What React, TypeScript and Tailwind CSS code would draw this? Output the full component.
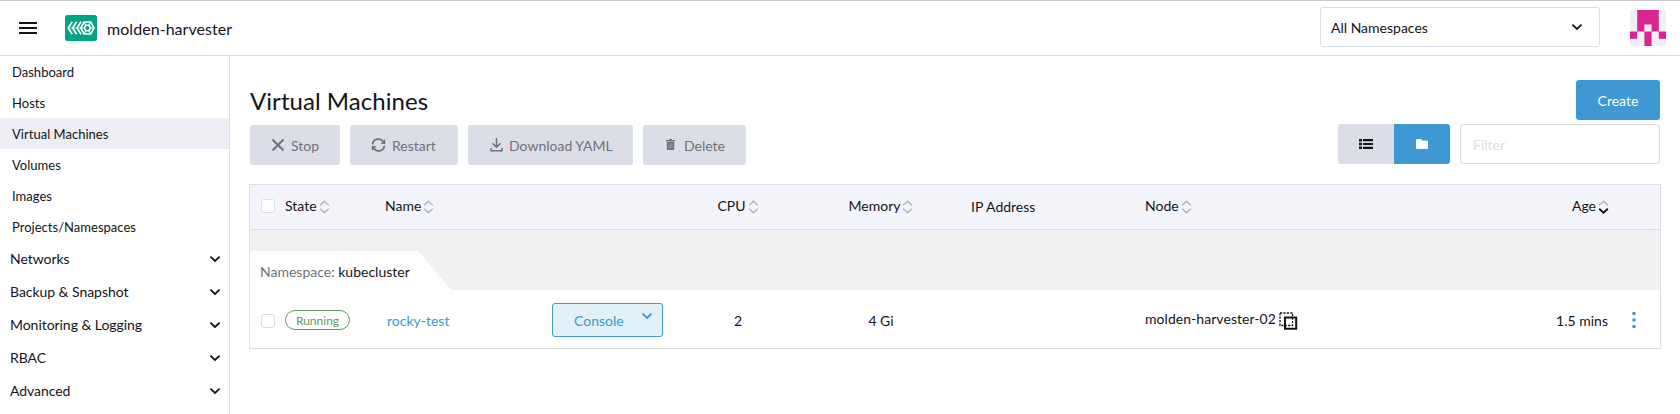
import type { ReactNode } from "react";

const navItems = ["Dashboard", "Hosts", "Virtual Machines", "Volumes", "Images", "Projects/Namespaces"];
const navGroups = ["Networks", "Backup & Snapshot", "Monitoring & Logging", "RBAC", "Advanced"];

function Chevron({ className = "" }: { className?: string }) {
  return (
    <svg className={className} width="12" height="8" viewBox="0 0 12 8" fill="none" stroke="currentColor" strokeWidth="1.8">
      <path d="M1.4 1.6 6 5.9l4.6-4.3" />
    </svg>
  );
}

function SortIcon({ active = false }: { active?: boolean }) {
  return (
    <svg className="ml-[2px] mt-[2px] shrink-0" width="11" height="14" viewBox="0 0 11 14" fill="none" strokeWidth="1.4">
      <path d="M1.2 5.2 5.5 1.3l4.3 3.9" stroke="#b2b3bb" />
      <path d="M1.2 8.8l4.3 3.9 4.3-3.9" stroke={active ? "#141419" : "#b2b3bb"} strokeWidth={active ? 1.9 : 1.4} />
    </svg>
  );
}

function Logo() {
  return (
    <svg className="ml-7 shrink-0" width="32" height="26" viewBox="0 0 32 26" fill="none">
      <rect width="32" height="26" rx="2.5" fill="#00a383" />
      <g stroke="#fff" strokeWidth="1.7">
        <path d="M7.2 6.8 3.2 13l4 6.2M11.6 6.8 7.6 13l4 6.2M16 6.8 12 13l4 6.2" />
        <path d="M19 7h6.8l3.2 6-3.2 6H19l-3.2-6z" />
        <circle cx="22.4" cy="13" r="2.8" strokeWidth="1.4" />
        <path d="M16 13h3.4M25.4 13H29M19 7l2 3.4M25.8 7l-2 3.4M19 19l2-3.4M25.8 19l-2-3.4" strokeWidth="1.2" />
        <path d="M4 13h12" strokeWidth=".7" />
      </g>
    </svg>
  );
}

function Avatar() {
  return (
    <svg className="ml-[30px] shrink-0" width="36" height="36" viewBox="0 0 5 5">
      <rect width="5" height="5" fill="#f0f0f0" />
      <path fill="#da2591" d="M1 0h3v3H3V2H2v1H1zM0 3h1v1H0zM4 3h1v1H4zM2 3h1v2H2z" />
    </svg>
  );
}

function ActionButton({ icon, label, width }: { icon: ReactNode; label: string; width: string }) {
  return (
    <button className={`flex h-10 items-center rounded-[3px] bg-[#dcdee7] pl-[21px] text-[14px] text-[#717179] ${width}`}>
      {icon}
      <span className="mt-[2px] whitespace-nowrap">{label}</span>
    </button>
  );
}

function Checkbox({ className }: { className: string }) {
  return <span className={`ml-[11px] mr-[10px] size-[14px] shrink-0 rounded-[3px] border border-[#dcdee7] bg-white ${className}`} />;
}

export default function App() {
  return (
    <div className="flex h-[414px] w-[1680px] flex-col overflow-hidden bg-white font-['Lato',sans-serif] text-[14px] leading-5 text-[#141419]">
      <header className="flex h-14 shrink-0 items-center border-b border-t border-b-[#dcdee7] border-t-[#c9c9c9] pl-[19px]">
        <svg width="18" height="12" viewBox="0 0 18 12" fill="#141419">
          <path d="M0 0h18v2H0zM0 5h18v2H0zM0 10h18v2H0z" />
        </svg>
        <Logo />
        <span className="ml-[10px] mt-px text-[16px] tracking-[0.05px]">molden-harvester</span>
        <div className="-mt-[2px] ml-auto flex h-10 w-[280px] items-center justify-between rounded-[3px] border border-[#dcdee7] pl-[10px] pr-[16px]">
          <span className="mt-[2px]">All Namespaces</span>
          <Chevron />
        </div>
        <Avatar />
        <div className="w-[14px]" />
      </header>

      <div className="flex min-h-0 flex-1">
        <nav className="w-[230px] shrink-0 border-r border-[#dcdee7]">
          {navItems.map((item) => (
            <div
              key={item}
              className={`flex h-[31px] items-center pl-3 text-[13px] tracking-[0.02px] ${item === "Virtual Machines" ? "bg-[#edeef3]" : ""}`}
            >
              {item}
            </div>
          ))}
          {navGroups.map((group) => (
            <div key={group} className="flex h-[33px] items-center justify-between pl-[10px] pr-2">
              <span className="tracking-[-0.05px]">{group}</span>
              <Chevron />
            </div>
          ))}
        </nav>

        <main className="min-w-0 flex-1 pl-[19px] pr-5 pt-6">
          <div className="flex h-10 items-center justify-between pl-px">
            <h1 className="mt-px text-[24px] leading-8 tracking-[0.05px]">Virtual Machines</h1>
            <button className="h-10 w-[84px] rounded-[3px] bg-[#3d98d3] pt-[2px] text-[14px] text-white">Create</button>
          </div>

          <div className="mt-1 flex h-[41px] pl-px">
            <div className="flex items-end gap-[10px]">
              <ActionButton
                width="w-[90px]"
                label="Stop"
                icon={
                  <svg className="mr-[6px]" width="14" height="14" viewBox="0 0 14 14" stroke="currentColor" strokeWidth="2">
                    <path d="m1.5 1.5 11 11M12.5 1.5l-11 11" />
                  </svg>
                }
              />
              <ActionButton
                width="w-[108px]"
                label="Restart"
                icon={
                  <svg className="mr-[6px]" width="15" height="14" viewBox="0 0 15 14" fill="none" stroke="currentColor" strokeWidth="1.7">
                    <path d="M1.5 6.4A5.8 5.8 0 0 1 12.6 4.6M13.5 7.6A5.8 5.8 0 0 1 2.4 9.4" />
                    <path d="M13.5 1.8v3.4h-3.2M1.5 12.2V8.8h3.2" strokeWidth="1.4" />
                  </svg>
                }
              />
              <ActionButton
                width="w-[165px]"
                label="Download YAML"
                icon={
                  <svg className="ml-px mr-[6px]" width="13" height="14" viewBox="0 0 13 14" fill="none" stroke="currentColor" strokeWidth="1.5">
                    <path d="M6.5 0v9M2.6 5.4l3.9 3.9 3.9-3.9M1 10v2.8h11V10" />
                  </svg>
                }
              />
              <ActionButton
                width="w-[103px]"
                label="Delete"
                icon={
                  <svg className="-mt-px ml-[2px] mr-[9px]" width="9" height="11" viewBox="0 0 9 11" fill="currentColor">
                    <path d="M3 0h3v1h3v1.5H0V1h3zM.8 3h7.4v7.2a.8.8 0 0 1-.8.8H1.6a.8.8 0 0 1-.8-.8z" />
                    <path d="M3 4.3v5.2M4.5 4.3v5.2M6 4.3v5.2" stroke="#b9bbc3" strokeWidth=".5" />
                  </svg>
                }
              />
            </div>
            <div className="ml-auto flex h-10">
              <div className="flex w-14 items-center justify-center rounded-l-[3px] bg-[#dcdee7]">
                <svg width="14" height="10" viewBox="0 0 14 10" fill="#141419">
                  <path d="M0 0h3v2.4H0zM4 0h10v2.2H4zM0 3.8h3v2.4H0zM4 3.9h10v2.2H4zM0 7.6h3V10H0zM4 7.8h10V10H4z" />
                </svg>
              </div>
              <div className="flex w-14 items-center justify-center rounded-r-[3px] bg-[#3d98d3]">
                <svg width="12" height="10" viewBox="0 0 12 10" fill="#fff">
                  <path d="M1 0h4l1.4 1.5H11a1 1 0 0 1 1 1V9a1 1 0 0 1-1 1H1a1 1 0 0 1-1-1V1a1 1 0 0 1 1-1z" />
                </svg>
              </div>
              <input
                className="ml-[10px] w-[200px] rounded-[3px] border border-[#dcdee7] pl-3 pt-[2px] text-[14px] placeholder:text-[#dcdee7]"
                placeholder="Filter"
              />
            </div>
          </div>

          <div className="mt-[19px] w-[1412px] border border-[#dcdee7]">
            <div className="flex h-[45px] items-center border-b border-[#dcdee7] bg-[#f4f5fa]">
              <Checkbox className="-mt-[2px]" />
              <div className="-mt-[2px] flex w-[100px] items-center">State<SortIcon /></div>
              <div className="-mt-[2px] flex w-[300px] items-center">Name<SortIcon /></div>
              <div className="-mt-[2px] flex w-[106px] items-center justify-center">CPU<SortIcon /></div>
              <div className="-mt-[2px] flex w-[180px] items-center justify-center">Memory<SortIcon /></div>
              <div className="w-[174px]">IP Address</div>
              <div className="-mt-[2px] flex w-[300px] items-center">Node<SortIcon /></div>
              <div className="-mt-[2px] flex w-[164px] items-center justify-end">Age<SortIcon active /></div>
            </div>

            <div className="flex h-[60px] items-end bg-[#f1f1f1]">
              <div className="h-[39px] w-[201px] rounded-tl-[4px] bg-white pl-[10px] pt-[11px] [clip-path:polygon(0_0,167px_0,171px_3px,201px_100%,0_100%)]">
                <span className="text-[#717179]">Namespace:</span> kubecluster
              </div>
            </div>

            <div className="flex h-[58px] items-center pt-[2px]">
              <Checkbox className="mt-[2px]" />
              <div className="w-[100px]">
                <span className="flex h-5 w-[65px] items-center justify-center rounded-full border border-[#5d995d] pt-px text-[12px] text-[#5d995d]">
                  Running
                </span>
              </div>
              <div className="w-[167px] pl-[2px] pt-px text-[#3d98d3]">rocky-test</div>
              <div className="w-[133px]">
                <button className="flex h-[34px] w-[111px] rounded-[3px] border border-[#3d98d3] bg-[#e2f0f8] pl-[21px] text-[14px] text-[#3d98d3]">
                  <span className="mt-[7px]">Console</span>
                  <Chevron className="ml-auto mr-[9px] mt-2" />
                </button>
              </div>
              <div className="w-[106px] pt-px text-center">2</div>
              <div className="w-[180px] pt-px text-center">4 Gi</div>
              <div className="w-[174px]" />
              <div className="flex w-[300px] items-center">
                <span className="-mt-[2px] tracking-[0.05px]">molden-harvester-02</span>
                <svg className="ml-[3px] mt-px" width="19" height="18" viewBox="0 0 19 18" fill="none" stroke="#141419">
                  <path d="M1 1h12.5v12.5H1z" strokeWidth="1.3" strokeDasharray="2.2 1.2" />
                  <path d="M6 5.5h11.2v11.2H6z" strokeWidth="2" />
                </svg>
              </div>
              <div className="w-[163px] pt-px text-right">1.5 mins</div>
              <svg className="-mt-px ml-[23px]" width="6" height="18" viewBox="0 0 6 18" fill="#3d98d3">
                <circle cx="3" cy="2.5" r="1.8" />
                <circle cx="3" cy="9" r="1.8" />
                <circle cx="3" cy="15.5" r="1.8" />
              </svg>
            </div>
          </div>
        </main>
      </div>
    </div>
  );
}
